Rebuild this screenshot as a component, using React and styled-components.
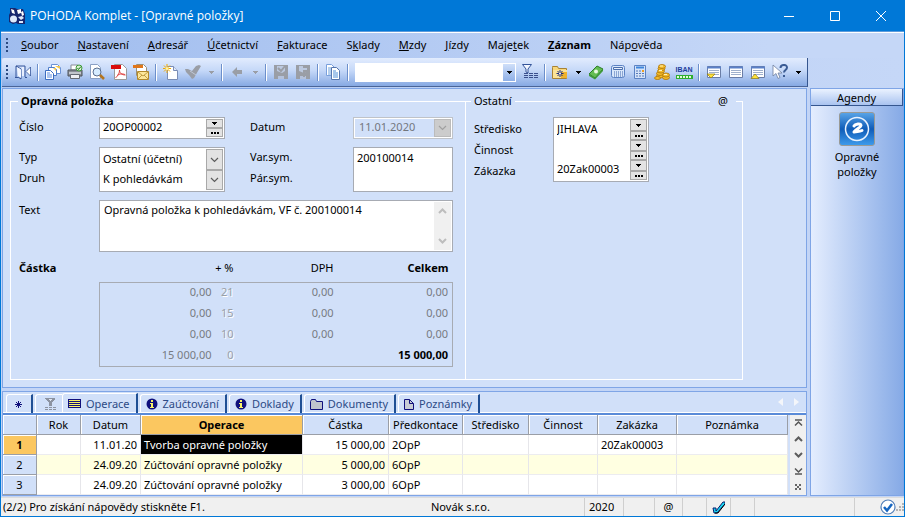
import React from "react";
import styled, { createGlobalStyle, css } from "styled-components";

const c = {
  blue: "#0078d7",
  frame: "#c3d5f6",
  panel: "#d1e0f9",
  line: "#7fa5e6",
  field: "#a7abb3",
  navy: "#10107c",
  muted: "#9a9ea6",
  highlight: "#fbc760",
  text: "#000",
};

const GlobalStyle = createGlobalStyle`
  *, *::before, *::after { box-sizing: border-box; }
  body { margin: 0; }
  body, button, input, select, textarea {
    font-family: "Noto Sans", "Open Sans", sans-serif;
    font-size: 11px;
    line-height: 16px;
    color: ${c.text};
  }
  button, input, select, textarea { margin: 0; padding: 0; border: 0; border-radius: 0; background: none; }
  svg { display: block; }
`;

/* ---------- window ---------- */

const Window = styled.div`
  display: flex;
  flex-direction: column;
  min-height: 100vh;
  border: solid ${c.blue};
  border-width: 0 1px 1px;
  background: ${c.frame};
`;

const TitleBar = styled.header`
  display: flex;
  align-items: center;
  height: 32px;
  padding-left: 7px;
  border-bottom: 1px solid #5c9bdc;
  background: ${c.blue};
  color: #fff;
`;

const Title = styled.h1`
  flex: 1;
  margin: 0 0 0 4px;
  font-family: "Open Sans", sans-serif;
  font-size: 12px;
  font-weight: 400;
`;

const WindowButton = styled.button`
  display: grid;
  place-items: center;
  width: 46px;
  height: 31px;
  color: #fff;
`;

/* ---------- menu and toolbar ---------- */

const MenuBar = styled.nav`
  display: flex;
  align-items: center;
  gap: 19px;
  height: 26px;
  padding: 0 0 2px 5px;
  border-top: 1px solid #fff;
  background: linear-gradient(90deg, #9fbcee, #c5d7f7 85%);
`;

const Grip = styled.span`
  width: 2px;
  height: 14px;
  margin-right: ${(p) => p.$after || 0}px;
  background: repeating-linear-gradient(#2b4a80 0 2px, transparent 2px 4px);
`;

const MenuButton = styled.button`
  white-space: nowrap;
  font-weight: ${(p) => (p.$bold ? 700 : 400)};
  &:first-of-type { margin-left: -6px; }
`;

const ToolbarRow = styled.div`
  padding: 0 96px 1px 1px;
  background: linear-gradient(90deg, #b4caf2, #c5d7f7);
`;

const Toolbar = styled.div`
  display: flex;
  align-items: center;
  height: 29px;
  padding-left: 4px;
  border-right: 1px solid #35568f;
  border-bottom: 1px solid #4a6598;
  border-radius: 2px 0 0 0;
  background: linear-gradient(#e2ecfe, #c5d8f8 45%, #86a9e3);
`;

const ToolButton = styled.button`
  display: grid;
  place-items: center;
  flex: none;
  width: ${(p) => (p.$narrow ? 14 : 22)}px;
  height: 24px;
`;

const Separator = styled.span`
  flex: none;
  width: 2px;
  height: 17px;
  margin: 0 3px;
  background: linear-gradient(90deg, #6c8fcb 50%, #fff 50%);
`;

const SearchBox = styled.div`
  display: flex;
  flex: none;
  width: 161px;
  height: 19px;
  margin: 0 3px;
  border: 1px solid #fff;
  background: #fff;
  input { flex: 1; min-width: 0; outline: 0; }
  button {
    display: grid;
    place-items: center;
    width: 12px;
    background: linear-gradient(#cfdff9, #8fb0e7);
  }
`;

/* ---------- layout of the workspace ---------- */

const Workspace = styled.div`
  display: grid;
  grid-template-columns: minmax(0, 1fr) 94px;
  gap: 3px;
  flex: 1;
  padding: 0 0 1px 1px;
`;

const MainColumn = styled.main`
  display: flex;
  flex-direction: column;
  gap: 3px;
`;

const Panel = styled.section`
  border: 1px solid ${c.line};
  background: ${c.panel};
`;

const FormPanel = styled(Panel)`
  display: flex;
  flex: 1;
  padding: 4px 8px 7px 7px;
`;

const Group = styled.fieldset`
  position: relative;
  width: ${(p) => p.$width}px;
  min-width: 0;
  margin: 0;
  padding: 8px 11px 0 8px;
  border: 1px solid #fff;
  ${(p) => p.$joined && css`border-left: 0;`}
`;

const GroupTitle = styled.legend`
  margin-left: ${(p) => (p.$strong ? -1 : -3)}px;
  padding: 0 3px;
  font-weight: ${(p) => (p.$strong ? 700 : 400)};
`;

const MailMark = styled.button`
  position: absolute;
  top: -16px;
  right: 6px;
  padding: 0 8px;
  background: ${c.panel};
`;

const FormGrid = styled.div`
  display: grid;
  grid-template-columns: 80px 126px 25px 103px 100px;
  row-gap: 8px;
`;

const LabelStack = styled.div`
  display: flex;
  flex-direction: column;
  grid-column: ${(p) => p.$col || "auto"};
  padding-top: ${(p) => p.$top || 0}px;
  label { height: 21px; line-height: 20px; }
  label:only-child { height: auto; }
`;

const fieldBorder = css`
  border: 1px solid ${c.field};
  background: #fff;
`;

const FieldStack = styled.div`
  display: flex;
  flex-direction: column;
  grid-column: ${(p) => p.$col || "auto"};
  padding: 1px;
  ${fieldBorder}
`;

const FieldRow = styled.div`
  display: flex;
  height: ${(p) => p.$height || 20}px;
`;

const TextInput = styled.input`
  flex: 1;
  width: 100%;
  min-width: 0;
  padding: 0 0 2px 2px;
  outline: 0;
  &:disabled { padding-left: 4px; color: #73777e; }
`;

const DateField = styled.div`
  display: flex;
  grid-column: 5;
  padding: 1px;
  border: 1px solid #bfc3c9;
  box-shadow: inset 0 0 0 1px #fff;
  button {
    display: grid;
    place-items: center;
    width: 17px;
    border: 1px solid #bbb;
    background: #ccc;
  }
`;

const Steps = styled.div`
  display: grid;
  grid-template-rows: 1fr 9px;
  width: 17px;
  button {
    display: grid;
    place-items: center;
    border: 1px solid #a9a9a9;
    background: #e3e3e3;
    overflow: hidden;
  }
`;

const SelectBox = styled.div`
  display: grid;
  flex: 1;
  > * { grid-area: 1 / 1; }
  select { appearance: none; padding: 0 0 2px 2px; outline: 0; }
`;

const SelectArrow = styled.span`
  display: grid;
  place-items: center;
  justify-self: end;
  width: 17px;
  border: 1px solid #a9a9a9;
  background: #e3e3e3;
  pointer-events: none;
`;

const NoteField = styled.div`
  display: flex;
  grid-column: 2 / -1;
  height: 52px;
  padding: 1px;
  ${fieldBorder}
  textarea { flex: 1; padding: 0 3px; resize: none; outline: 0; overflow: hidden; }
`;

const NoteScroll = styled.div`
  display: flex;
  flex-direction: column;
  justify-content: space-between;
  width: 17px;
  padding: 6px 4px;
  background: #f0f0f0;
`;

const SumTitle = styled.span`
  font-weight: 700;
  line-height: 16px;
`;

const SumTable = styled.table`
  grid-column: 2 / -1;
  width: 100%;
  border-collapse: collapse;
  table-layout: fixed;
  th, td { padding: 0 4px 0 0; text-align: right; }
  th { height: 22px; padding-bottom: 6px; font-weight: 400; }
  th:last-child { font-weight: 700; }
  td { height: 21px; padding-bottom: 2px; color: #777b82; }
  tbody { border: 1px solid ${c.field}; }
  td:nth-child(2) { color: #9a9fa8; text-shadow: 1px 1px 0 #fff; }
`;

const Total = styled.strong`
  color: #000;
`;

const SideGrid = styled.div`
  display: grid;
  grid-template-columns: 79px 96px;
`;

/* ---------- lower panel ---------- */

const TabStrip = styled.div`
  display: flex;
  align-items: flex-end;
  height: 23px;
  border-bottom: 2px solid #5a8bd8;
  padding: 0 4px 0 3px;
  box-shadow: inset 0 -1px 0 #fff;
`;

const Tab = styled.button`
  display: flex;
  align-items: center;
  justify-content: center;
  gap: 5px;
  height: ${(p) => (p.$active ? 20 : 19)}px;
  min-width: 27px;
  margin-right: ${(p) => (p.$icon ? 0 : 2)}px;
  padding: 0 ${(p) => (p.$icon ? 3 : 6)}px 0 5px;
  border: solid #fff;
  border-width: 1px 0 0 1px;
  border-radius: 3px 0 0 0;
  border-right: ${(p) => (p.$icon ? "0" : "2px solid #1f4f94")};
  color: #2c4a86;
  white-space: nowrap;
`;

const TabArrows = styled.div`
  display: flex;
  gap: 11px;
  margin: 0 3px 7px auto;
`;

const GridArea = styled.div`
  display: flex;
`;

const DataTable = styled.table`
  flex: 1;
  min-width: 0;
  border-collapse: separate;
  border-spacing: 0;
  table-layout: fixed;
  th, td {
    height: 20px;
    padding: 0 3px;
    border-right: 1px solid #e6e6ea;
    border-bottom: 1px solid #ececf0;
    white-space: nowrap;
    overflow: hidden;
  }
  th {
    padding: 0;
    border-color: ${c.muted};
    background: ${c.panel};
    box-shadow: inset 1px 1px 0 #fff;
    font-weight: 400;
  }
  th[aria-sort], tr[aria-current] th { background: ${c.highlight}; font-weight: 700; }
`;

const DataRow = styled.tr`
  background: ${(p) => (p.$tinted ? "#ffffe1" : "#fff")};
`;

const Cell = styled.td`
  text-align: ${(p) => p.$align || "left"};
  ${(p) => p.$selected && css`background: #000; color: #fff;`}
`;

const GridScroll = styled.div`
  display: flex;
  flex-direction: column;
  align-items: center;
  justify-content: space-between;
  width: 18px;
  padding: 4px 0 5px;
  border-left: 2px solid ${c.panel};
  background: #f0f0f0;
`;

/* ---------- agenda list ---------- */

const Sidebar = styled.aside`
  border: 1px solid ${c.line};
  background: linear-gradient(90deg, #e4edfe, #86aae6);
`;

const SidebarTitle = styled.h2`
  margin: 0;
  padding-top: 1px;
  border-right: 1px solid #35568f;
  border-bottom: 1px solid #35568f;
  background: linear-gradient(#eaf2ff, #a9c3f0);
  font-size: 11px;
  font-weight: 400;
  line-height: 15px;
  text-align: center;
`;

const Agenda = styled.a`
  display: flex;
  flex-direction: column;
  align-items: center;
  gap: 3px;
  margin-top: 6px;
  color: #000;
  line-height: 15px;
  text-align: center;
  text-decoration: none;
`;

/* ---------- status bar ---------- */

const StatusBar = styled.footer`
  display: flex;
  height: 19px;
  border-top: 1px solid #dcdcdc;
  background: #f0f0f0;
`;

const StatusCell = styled.div`
  display: flex;
  align-items: center;
  flex: ${(p) => (p.$width ? "none" : "1")};
  justify-content: ${(p) => p.$align || "flex-start"};
  width: ${(p) => (p.$width ? `${p.$width}px` : "auto")};
  padding-left: ${(p) => (p.$align ? 0 : p.$lead ? 2 : 4)}px;
  border-left: ${(p) => (p.$lead ? "0" : "1px solid #cfcfcf")};
  white-space: nowrap;
`;

/* ---------- icons ---------- */

const Svg = ({ w = 16, h = 16, children, ...rest }) => (
  <svg width={w} height={h} viewBox={`0 0 ${w} ${h}`} fill="none" aria-hidden="true" {...rest}>
    {children}
  </svg>
);

const Down = ({ color = "#000" }) => (
  <Svg w={5} h={3} shapeRendering="crispEdges"><path d="M0 0h5v1H4v1H3v1H2V2H1V1H0z" fill={color} /></Svg>
);
const Dots = () => (
  <Svg w={8} h={2} shapeRendering="crispEdges"><path d="M0 0h2v2H0zM3 0h2v2H3zM6 0h2v2H6z" fill="#000" /></Svg>
);
const Chevron = ({ color = "#5c5c5c", up, thick }) => (
  <Svg w={9} h={6}><path d={up ? "M1 5l3.500-3.500L8 5" : "M1 1l3.500 3.500L8 1"} stroke={color} strokeWidth={thick ? 2 : 1.200} /></Svg>
);

const Logo = () => (
  <Svg w={18} h={18}>
    <path d="M2 1h5l2 1h6l2 5v10h-7l-2-1-3 1-4-2V8L2 6z" fill="#16266e" />
    <path d="M3 2l3 1 1 4-3-1zM9 3l4-1v4l-3 1zM13 5l2-1 1 4-2 1z" fill="#fff" />
    <circle cx="5.500" cy="12" r="3.500" fill="#dfe9fb" />
    <path d="M10 10l4-1 2 2-3 2zM11 14h4v2h-4z" fill="#dfe9fb" />
  </Svg>
);

const Door = () => (
  <Svg>
    <path d="M1 13V2h9v11M0 13.500h3M1 2l5 3v10l-3-2M10 13.500h2" stroke="#34549a" />
    <path d="M2 3l4 2.500V14l-3-2z" fill="#f3f7ff" />
    <path d="M7 3h2v9H7z" fill="#e9f0ff" />
    <path d="M15.500 3v9L11 7.500z" fill="#fff" stroke="#34549a" strokeWidth=".8" />
  </Svg>
);
const Pages = () => (
  <Svg>
    <path d="M6.500.5h6l3 3v6h-9z" fill="#fff" stroke="#6b93d6" /><path d="M10 2h5v3z" fill="#f4c94e" />
    <path d="M3.500 3.500h6l2 2v6h-8z" fill="#fff" stroke="#4f7dc9" /><path d="M8 4h3v3z" fill="#f4c94e" />
    <path d="M.5 6.500h5l3 3v6h-8z" fill="#fff" stroke="#3b6cc0" /><path d="M2 9h3M2 11h5M2 13h5" stroke="#5a8be0" />
  </Svg>
);
const Printer = () => (
  <Svg>
    <path d="M4 1h7v5H4z" fill="#fff" stroke="#8a8f98" /><path d="M1 6h14v6H1z" fill="#8b9098" stroke="#4d525b" />
    <path d="M2 8h12v2H2z" fill="#c2c6cc" /><path d="M3.500 10.500h9v4h-9z" fill="#eef0f3" stroke="#666b74" />
    <circle cx="12" cy="4" r="3" fill="#d8f0cf" stroke="#3d9a3a" /><path d="M10.500 4l1 1.500L14 2.500" stroke="#1e7b1e" />
  </Svg>
);
const Preview = () => (
  <Svg>
    <path d="M1.500.5h7l3 3v11h-10z" fill="#fff" stroke="#8aa0c4" />
    <circle cx="8" cy="8" r="4" fill="#d6ecff" stroke="#5b6f90" />
    <path d="M11 11l4 4" stroke="#b4741e" strokeWidth="2.500" />
  </Svg>
);
const Pdf = () => (
  <Svg>
    <path d="M3.500.5h8l4 4v11h-12z" fill="#fff" stroke="#9a9a9a" /><path d="M0 1h10v4H0z" fill="#d90d0d" />
    <path d="M8.500 6c0 3-1 5-4 8M8.500 6c0 3 2 5 6 5M6 11.500c3-2 5-2 8-1" stroke="#e04848" />
  </Svg>
);
const MailPdf = () => (
  <Svg>
    <path d="M3.500.5h7l3 3v8h-10z" fill="#fff" stroke="#9a8f75" /><path d="M0 1h10v3H0z" fill="#e0761a" />
    <path d="M4.500 7.500h11v8h-11z" fill="#fde79a" stroke="#b38a2c" /><path d="M5 8l5 4 5-4M5 15l4-4M15 15l-4-4" stroke="#b38a2c" strokeWidth=".8" />
  </Svg>
);
const NewDoc = () => (
  <Svg>
    <path d="M4.500 2.500h6l4 4v9h-10z" fill="#fff" stroke="#7a8db5" /><path d="M10.500 2.500v4h4" fill="#dfe8fa" stroke="#7a8db5" />
    <path d="M4 0v9M0 4.500h8M1 1.500l6 6M7 1.500l-6 6" stroke="#f0a800" /><circle cx="4" cy="4.500" r="1.500" fill="#fff3a0" />
  </Svg>
);
const Brush = () => (
  <Svg><path d="M0 5h3l2 1 2 1 4-5 3-1 2 1-3 5-4 7-2 1-3-4-3-3z" fill={c.muted} /><path d="M5 7l6 4" stroke="#c0c8d6" /></Svg>
);
const Back = () => (
  <Svg><path d="M3 8l5-5v3h5v4H8v3z" fill={c.muted} /></Svg>
);
const Save = ({ second }) => (
  <Svg>
    <path d="M1 1h14v14H1z" fill={c.muted} />
    <path d="M4 2h8v5l-3 2-5-2z" fill="#bcc9e0" />
    <path d="M5 12h6v3H5z" fill="#b4c2dc" />
    <path d={second ? "M8 3h5v4H9v6" : "M5 4l3 3 4-5"} stroke={c.muted} strokeWidth="2" />
  </Svg>
);
const CopyDocs = () => (
  <Svg>
    <path d="M1.500.5h5l3 3v8h-8z" fill="#fff" stroke="#7aa0dc" /><path d="M3 4h3M3 6h5M3 8h5M3 10h4" stroke="#6aa0dc" />
    <path d="M6.500 3.500h5l3 3v9h-8z" fill="#fff" stroke="#5676ae" /><path d="M8 7h3M8 9h5M8 11h5M8 13h5" stroke="#4f8ed6" />
  </Svg>
);
const Filter = () => (
  <Svg>
    <path d="M.5.500h9L6 5v4l-2-1V5z" fill="#f2f6ff" stroke="#34549a" />
    <path d="M2 9.500h14M2 11.500h14M2 13.500h14" stroke="#3a4f8c" strokeDasharray="4 1" />
  </Svg>
);
const Folder = () => (
  <Svg>
    <path d="M.5 3.500v-1h5l1 2h8v10H.5z" fill="#f8d77a" stroke="#a88234" /><path d="M1 6h14v8H1z" fill="#fbe397" />
    <path d="M9 8h6v6H9z" fill="#f0b22c" />
    <path d="M8 6v7M4.500 9.500h7M5.500 7l5 5M10.500 7l-5 5" stroke="#1b2a7a" /><circle cx="8" cy="9.500" r="1" fill="#fff" />
  </Svg>
);
const Money = () => (
  <Svg>
    <path d="M1 10l8-8 6 3-8 9z" fill="#63bd52" stroke="#2e7d2a" /><circle cx="8" cy="7.500" r="2" fill="#e9f8e2" />
    <path d="M1 10v2l6 3.500L15 7V5l-8 9z" fill="#3e9a37" />
  </Svg>
);
const CalcWide = () => (
  <Svg>
    <rect x="1.500" y="1.500" width="13" height="12" rx="2" fill="#d9e7fb" stroke="#5b82c4" />
    <path d="M3.500 3.500h9v2h-9z" fill="#eaf2ff" stroke="#4a6eac" />
    <path d="M4 8h9M4 10h9M4 12h9" stroke="#3f66ac" strokeDasharray="1 1" />
  </Svg>
);
const CalcTall = () => (
  <Svg>
    <path d="M2.500 1.500h11v13h-11z" fill="#d5e3f8" stroke="#5b82c4" /><path d="M4 3.500h8" stroke="#3f86dc" strokeWidth="2" />
    <path d="M4 7h8M4 9.500h8M4 12h8" stroke="#5579b8" strokeDasharray="2 1" /><path d="M10 7h2" stroke="#f0a024" strokeWidth="2" />
  </Svg>
);
const Coins = () => (
  <Svg>
    <g fill="#f5bd2d" stroke="#ad7307" strokeWidth=".8">
      <ellipse cx="6" cy="12" rx="3.500" ry="2" /><ellipse cx="6" cy="9.500" rx="3.500" ry="2" /><ellipse cx="7" cy="7" rx="3.500" ry="2" />
      <ellipse cx="7.500" cy="4.500" rx="3.500" ry="2" /><ellipse cx="8" cy="2.500" rx="3.500" ry="2" />
      <ellipse cx="12" cy="13.500" rx="3.500" ry="2" /><ellipse cx="12" cy="11" rx="3.500" ry="2" /><ellipse cx="3.500" cy="14" rx="3" ry="1.500" />
    </g>
    <path d="M6 2h3M5 6.500h3M10 10.500h3" stroke="#fff3b8" />
  </Svg>
);

const IbanMark = styled.span`
  display: flex;
  flex-direction: column;
  align-items: center;
  gap: 1px;
  color: #1c3c9c;
  font: 700 7px/8px "Liberation Sans", sans-serif;
`;
const Iban = () => (
  <IbanMark>
    IBAN
    <Svg w={17} h={4} shapeRendering="crispEdges">
      <path d="M0 0h17v4H0z" fill="#2fae2f" /><path d="M1 2h15" stroke="#e3fbd6" strokeWidth="2" strokeDasharray="2 1" />
    </Svg>
  </IbanMark>
);

const ListView = ({ mark }) => (
  <Svg>
    <path d="M1.500 2.500h13v11h-13z" fill="#fff" stroke="#6a7da6" /><path d="M1 3.500h14" stroke="#5a80c8" strokeWidth="2" />
    <path d="M3 6.500h10M3 8.500h10M3 10.500h10" stroke="#9fb0cc" />
    {mark === "down" && <path d="M1 10h8l-4 4z" fill="#ffe23a" stroke="#8c7a10" strokeWidth=".7" />}
    {mark === "up" && <path d="M1 14.500h8l-4-4.500z" fill="#ffe23a" stroke="#8c7a10" strokeWidth=".7" />}
  </Svg>
);
const Help = () => (
  <Svg w={18} h={16}>
    <path d="M2 1v11l3-2.500 2 5 2-1-2-4.500h4z" fill="#fff" stroke="#6d7f9f" strokeWidth=".8" />
    <path d="M9.500 4c0-4 6.500-4 6.500-.5 0 2.500-3 2.500-3 5M13 11v2" stroke="#3b5c94" strokeWidth="2" />
  </Svg>
);
const FilterSmall = () => (
  <Svg w={13} h={12} shapeRendering="crispEdges">
    <path d="M1 0h10v1L8 4v4H5V4L1 1z" fill="#8c93a1" />
    <path d="M4 1h5L6 3z" fill="#dfe6f2" />
    <path d="M1 9.500h11M1 11.500h11" stroke="#8c93a1" strokeDasharray="3 1" />
  </Svg>
);
const Rows = () => (
  <Svg w={13} h={9} shapeRendering="crispEdges"><path d="M0 0h13v9H0z" fill={c.navy} /><path d="M1 1.500h11M1 3.500h11M1 5.500h11M1 7.500h11" stroke="#f8f26a" strokeWidth="1" /></Svg>
);
const Info = () => (
  <Svg w={12} h={12}>
    <circle cx="6" cy="6" r="5.500" fill={c.navy} />
    <path d="M5 2h2v2H5zM4 5h3v4h1v1H4V9h1V6H4z" fill="#f8f26a" shapeRendering="crispEdges" />
  </Svg>
);
const FolderSmall = () => (
  <Svg w={13} h={11}><path d="M.5 10.500v-8l1-2h4l1 2h6v8z" fill="#bfc3cc" stroke={c.navy} /></Svg>
);
const Sheet = () => (
  <Svg w={10} h={11}><path d="M.5.500h5l4 4v6h-9z" fill="#c9cdd5" stroke={c.navy} /><path d="M5.500.5v4h4" stroke={c.navy} /></Svg>
);
const Star = () => (
  <Svg w={7} h={7}><path d="M3.500 0v7M0 3.500h7M1 1l5 5M6 1L1 6" stroke={c.navy} /></Svg>
);
const TabArrow = ({ right }) => (
  <Svg w={5} h={8}><path d={right ? "M0 0l5 4-5 4z" : "M5 0L0 4l5 4z"} fill="#f4f6fa" /></Svg>
);
const EdgeArrow = ({ up }) => (
  <Svg w={9} h={8}>
    <path d={up ? "M1 1h7M1 6.500L4.500 3 8 6.500" : "M1 7h7M1 1.500L4.500 5 8 1.500"} stroke="#555" strokeWidth="1.500" />
  </Svg>
);
const CrossDots = () => (
  <Svg w={6} h={6} shapeRendering="crispEdges"><path d="M0 0h2v2H0zM4 0h2v2H4zM2 2h2v2H2zM0 4h2v2H0zM4 4h2v2H4z" fill="#666" /></Svg>
);
const AgendaIcon = () => (
  <Svg w={36} h={34}>
    <defs>
      <linearGradient id="tile" x2="0" y2="1"><stop stopColor="#5aa5e8" /><stop offset=".5" stopColor="#0f5cb8" /><stop offset="1" stopColor="#3f9cec" /></linearGradient>
    </defs>
    <rect x=".5" y=".5" width="35" height="33" rx="2.500" fill="url(#tile)" stroke="#9a9a95" />
    <circle cx="18" cy="17" r="11.500" stroke="#e8f2ff" strokeWidth="1.500" />
    <path d="M15 14c1-2 7-3 7-.500 0 2-4 2.500-7 6.500 3-1 5 0 8-1.500" stroke="#fff" strokeWidth="3" strokeLinecap="round" strokeLinejoin="round" />
  </Svg>
);
const StatusCheck = () => (
  <Svg w={13} h={13}>
    <path d="M1 7h3v3l7-9h2v2L5 12H2z" fill="#17d6f2" stroke="#061a6e" strokeWidth="1" /><path d="M3 12h3l7-9" stroke="#000" />
  </Svg>
);
const SyncCheck = () => (
  <Svg w={16} h={16}>
    <circle cx="8" cy="8" r="7" fill="#fff" stroke="#4f7db8" strokeWidth="1.200" /><path d="M4 8l3 3.500L12 5" stroke="#1565c0" strokeWidth="2.500" />
  </Svg>
);
const SizeGrip = () => (
  <Svg w={8} h={8} shapeRendering="crispEdges"><path d="M6 0h2v2H6zM3 3h2v2H3zM6 3h2v2H6zM0 6h2v2H0zM3 6h2v2H3zM6 6h2v2H6z" fill="#b4b4b4" /></Svg>
);

/* ---------- data ---------- */

const MENU = [
  ["", "S", "oubor"], ["", "N", "astavení"], ["", "A", "dresář"], ["", "Ú", "četnictví"], ["", "F", "akturace"],
  ["S", "k", "lady"], ["", "M", "zdy"], ["", "J", "ízdy"], ["Maje", "t", "ek"], ["", "Z", "áznam", true], ["Náp", "o", "věda"],
];

const TOOLS_LEFT = [
  ["Konec", Door], null,
  ["Kopírovat agendu", Pages], ["Tisk", Printer], ["Náhled", Preview], ["Export do PDF", Pdf], ["Odeslat PDF", MailPdf], null,
  ["Nový záznam", NewDoc], ["Přenos", Brush], ["Další přenosy", Down, { color: c.muted }], null,
  ["Zpět", Back], ["Historie", Down, { color: c.muted }], null,
  ["Uložit", Save], ["Uložit jako", Save, { second: true }], null,
  ["Kopie záznamu", CopyDocs], null,
];

const TOOLS_RIGHT = [
  ["Výběr", Filter], null,
  ["Složky", Folder], ["Další složky", Down], ["Peníze", Money], ["Kalkulačka", CalcWide], ["Výpočet", CalcTall],
  ["Měny", Coins], ["IBAN", Iban], null,
  ["Dolů", ListView, { mark: "down" }], ["Seznam", ListView], ["Nahoru", ListView, { mark: "up" }], ["Nápověda", Help], ["Více", Down],
];

const SUMS = [
  ["0,00", "21", "0,00", "0,00"],
  ["0,00", "15", "0,00", "0,00"],
  ["0,00", "10", "0,00", "0,00"],
  ["15 000,00", "0", "", "15 000,00"],
];

const COLUMNS = [
  ["", 34], ["Rok", 44], ["Datum", 60], ["Operace", 162], ["Částka", 86],
  ["Předkontace", 74], ["Středisko", 66], ["Činnost", 69], ["Zakázka", 79], ["Poznámka"],
];

const RECORDS = [
  { id: 1, date: "11.01.20", name: "Tvorba opravné položky", sum: "15 000,00", code: "2OpP", order: "20Zak00003" },
  { id: 2, date: "24.09.20", name: "Zúčtování opravné položky", sum: "5 000,00", code: "6OpP", order: "" },
  { id: 3, date: "24.09.20", name: "Zúčtování opravné položky", sum: "3 000,00", code: "6OpP", order: "" },
];

const TABS = [["Operace", Rows, true], ["Zaúčtování", Info], ["Doklady", Info], ["Dokumenty", FolderSmall], ["Poznámky", Sheet]];

/* ---------- composed parts ---------- */

const Tools = ({ items }) =>
  items.map((item, i) => {
    if (!item) return <Separator key={i} />;
    const [label, Icon, props] = item;
    return (
      <ToolButton key={i} aria-label={label} $narrow={Icon === Down}>
        <Icon {...props} />
      </ToolButton>
    );
  });

const StepButtons = ({ name }) => (
  <Steps>
    <button aria-label={`${name}: rozbalit`}><Down /></button>
    <button aria-label={`${name}: vybrat`}><Dots /></button>
  </Steps>
);

const Choice = ({ id, value }) => (
  <SelectBox>
    <select id={id} defaultValue={value}><option>{value}</option></select>
    <SelectArrow><Chevron /></SelectArrow>
  </SelectBox>
);

const RecordForm = () => (
  <Group $width={456}>
    <GroupTitle $strong>Opravná položka</GroupTitle>
    <FormGrid>
      <LabelStack><label htmlFor="number">Číslo</label></LabelStack>
      <FieldStack>
        <FieldRow $height={18}><TextInput id="number" defaultValue="20OP00002" /><StepButtons name="Číslo" /></FieldRow>
      </FieldStack>
      <LabelStack $col="4"><label htmlFor="date">Datum</label></LabelStack>
      <DateField>
        <TextInput id="date" defaultValue="11.01.2020" disabled />
        <button disabled aria-label="Kalendář"><Chevron color="#a0a0a0" /></button>
      </DateField>

      <LabelStack>
        <label htmlFor="type">Typ</label>
        <label htmlFor="kind">Druh</label>
      </LabelStack>
      <FieldStack>
        <FieldRow $height={21}><Choice id="type" value="Ostatní (účetní)" /></FieldRow>
        <FieldRow $height={20}><Choice id="kind" value="K pohledávkám" /></FieldRow>
      </FieldStack>
      <LabelStack $col="4">
        <label htmlFor="variable">Var.sym.</label>
        <label htmlFor="pair">Pár.sym.</label>
      </LabelStack>
      <FieldStack>
        <FieldRow><TextInput id="variable" defaultValue="200100014" /></FieldRow>
        <FieldRow><TextInput id="pair" /></FieldRow>
      </FieldStack>

      <LabelStack><label htmlFor="note">Text</label></LabelStack>
      <NoteField>
        <textarea id="note" defaultValue="Opravná položka k pohledávkám, VF č. 200100014" />
        <NoteScroll><Chevron up thick color="#bdbdbd" /><Chevron thick color="#bdbdbd" /></NoteScroll>
      </NoteField>

      <SumTitle>Částka</SumTitle>
      <SumTable>
        <colgroup><col width="116" /><col width="22" /><col width="100" /><col /></colgroup>
        <thead>
          <tr><th colSpan={2}>+ %</th><th>DPH</th><th>Celkem</th></tr>
        </thead>
        <tbody>
          {SUMS.map((row, i) => (
            <tr key={i}>
              {row.map((value, j) => (
                <td key={j}>{i === 3 && j === 3 ? <Total>{value}</Total> : value}</td>
              ))}
            </tr>
          ))}
        </tbody>
      </SumTable>
    </FormGrid>
  </Group>
);

const OtherForm = () => (
  <Group $width={277} $joined>
    <GroupTitle>Ostatní</GroupTitle>
    <MailMark aria-label="E-mail">@</MailMark>
    <SideGrid>
      <LabelStack $top={2}>
        <label htmlFor="center">Středisko</label>
        <label htmlFor="activity">Činnost</label>
        <label htmlFor="order">Zákazka</label>
      </LabelStack>
      <FieldStack>
        {[["center", "JIHLAVA"], ["activity", ""], ["order", "20Zak00003"]].map(([id, value]) => (
          <FieldRow key={id} $height={id === "center" ? 21 : 20}>
            <TextInput id={id} defaultValue={value} />
            <StepButtons name={id} />
          </FieldRow>
        ))}
      </FieldStack>
    </SideGrid>
  </Group>
);

const Records = () => (
  <Panel>
    <TabStrip role="tablist">
      <Tab role="tab" aria-label="Nový"><Star /></Tab>
      <Tab role="tab" aria-label="Filtr" $icon><FilterSmall /></Tab>
      {TABS.map(([name, Icon, active]) => (
        <Tab key={name} role="tab" aria-selected={!!active} $active={active}>
          <Icon />{name}
        </Tab>
      ))}
      <TabArrows><TabArrow /><TabArrow right /></TabArrows>
    </TabStrip>
    <GridArea>
      <DataTable>
        <colgroup>{COLUMNS.map(([name, width]) => <col key={name} width={width} />)}</colgroup>
        <thead>
          <tr>
            {COLUMNS.map(([name]) => (
              <th key={name} scope="col" aria-sort={name === "Operace" ? "ascending" : undefined}>{name}</th>
            ))}
          </tr>
        </thead>
        <tbody>
          {RECORDS.map((r, i) => (
            <DataRow key={r.id} $tinted={i === 1} aria-current={i === 0 ? "true" : undefined}>
              <th scope="row">{r.id}</th>
              <Cell />
              <Cell $align="right">{r.date}</Cell>
              <Cell $selected={i === 0}>{r.name}</Cell>
              <Cell $align="right">{r.sum}</Cell>
              <Cell>{r.code}</Cell>
              <Cell />
              <Cell />
              <Cell>{r.order}</Cell>
              <Cell />
            </DataRow>
          ))}
        </tbody>
      </DataTable>
      <GridScroll>
        <EdgeArrow up /><Chevron up thick /><Chevron thick /><EdgeArrow /><CrossDots />
      </GridScroll>
    </GridArea>
  </Panel>
);

export default function App() {
  return (
    <Window>
      <GlobalStyle />
      <TitleBar>
        <Logo />
        <Title>POHODA Komplet - [Opravné položky]</Title>
        <WindowButton aria-label="Minimalizovat"><Svg w={10} h={10}><path d="M0 5.500h10" stroke="#fff" /></Svg></WindowButton>
        <WindowButton aria-label="Maximalizovat"><Svg w={10} h={10}><path d="M.5.500h9v9h-9z" stroke="#fff" /></Svg></WindowButton>
        <WindowButton aria-label="Zavřít"><Svg w={10} h={10}><path d="M0 0l10 10M10 0L0 10" stroke="#fff" /></Svg></WindowButton>
      </TitleBar>

      <MenuBar>
        <Grip />
        {MENU.map(([before, key, after, bold]) => (
          <MenuButton key={key} $bold={bold}>{before}<u>{key}</u>{after}</MenuButton>
        ))}
      </MenuBar>

      <ToolbarRow>
        <Toolbar>
          <Grip $after={4} />
          <Tools items={TOOLS_LEFT} />
          <SearchBox>
            <input aria-label="Hledat" />
            <button aria-label="Rozbalit"><Down /></button>
          </SearchBox>
          <Tools items={TOOLS_RIGHT} />
        </Toolbar>
      </ToolbarRow>

      <Workspace>
        <MainColumn>
          <FormPanel>
            <RecordForm />
            <OtherForm />
          </FormPanel>
          <Records />
        </MainColumn>
        <Sidebar>
          <SidebarTitle>Agendy</SidebarTitle>
          <Agenda href="#agenda"><AgendaIcon /><span>Opravné<br />položky</span></Agenda>
        </Sidebar>
      </Workspace>

      <StatusBar>
        <StatusCell $lead>(2/2) Pro získání nápovědy stiskněte F1.</StatusCell>
        <StatusCell $lead $width={155}>Novák s.r.o.</StatusCell>
        <StatusCell $width={39}>2020</StatusCell>
        <StatusCell $width={31} />
        <StatusCell $width={28} $align="center">@</StatusCell>
        <StatusCell $width={24} />
        <StatusCell $width={24} $align="center"><StatusCheck /></StatusCell>
        <StatusCell $width={24} />
        <StatusCell $width={100} />
        <StatusCell $width={50} $align="flex-end"><SyncCheck /><SizeGrip /></StatusCell>
      </StatusBar>
    </Window>
  );
}
